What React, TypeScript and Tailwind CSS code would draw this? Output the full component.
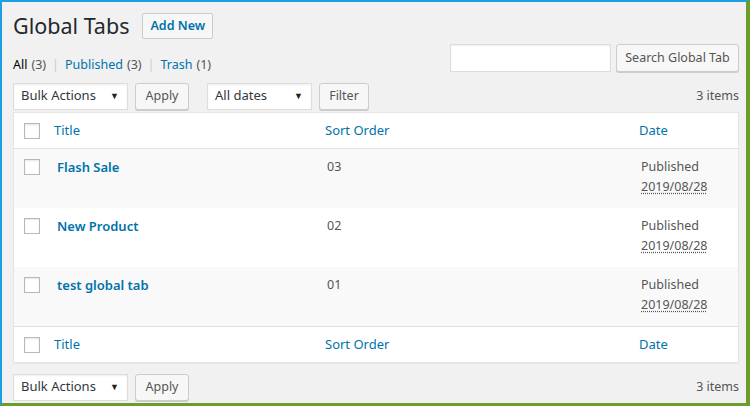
import React from "react";

const rows = [
  { title: "Flash Sale", order: "03", date: "2019/08/28" },
  { title: "New Product", order: "02", date: "2019/08/28" },
  { title: "test global tab", order: "01", date: "2019/08/28" },
];

function Checkbox() {
  return (
    <span className="block w-4 h-4 bg-white border border-[#b4b9be] shadow-[inset_0_1px_2px_rgba(0,0,0,0.1)]" />
  );
}

function Select({ label, width }: { label: string; width: string }) {
  return (
    <div
      className={`${width} h-[27px] flex items-center justify-between pl-[7px] pr-[8px] bg-white border border-[#ddd] shadow-[inset_0_1px_2px_rgba(0,0,0,0.07)] text-[13px] text-[#32373c]`}
    >
      <span>{label}</span>
      <span className="text-[9px] text-[#222]">▼</span>
    </div>
  );
}

function Button({ label, className = "" }: { label: string; className?: string }) {
  return (
    <button
      className={`h-[27px] px-[8px] whitespace-nowrap rounded-[3px] bg-[#f7f7f7] border border-[#ccc] shadow-[0_1px_0_#ccc] text-[12.5px] text-[#555] ${className}`}
    >
      {label}
    </button>
  );
}

function HeaderRow({ top }: { top: boolean }) {
  return (
    <div
      className={`grid grid-cols-[40px_271px_314px_1fr] items-center text-[13px] text-[#0073aa] ${
        top ? "h-[36px] border-b border-[#e1e1e1]" : "h-[36px] border-t border-[#e1e1e1]"
      }`}
    >
      <div className="pl-[10px]">
        <Checkbox />
      </div>
      <div>Title</div>
      <div>Sort Order</div>
      <div>Date</div>
    </div>
  );
}

export default function App() {
  return (
    <div
      className="w-[750px] h-[406px] overflow-hidden bg-[#f1f1f1] border-t-2 border-l-2 border-r-4 border-b-[3px] border-t-[#1e9ee2] border-l-[#1e9ee2] border-r-[#6c9c2c] border-b-[#6c9c2c] pl-[11px] pr-[7px]"
      style={{ fontFamily: '"Noto Sans", "Open Sans", sans-serif' }}
    >
      {/* Page title */}
      <div className="flex items-center h-[26px] mt-[11px]">
        <h1 className="text-[21.5px] text-[#23282d] leading-none">Global Tabs</h1>
        <button className="ml-[13px] h-[26px] px-[7px] rounded-[2px] bg-[#f7f7f7] border border-[#ccc] text-[12.5px] font-semibold text-[#0073aa]">
          Add New
        </button>
      </div>

      {/* Views + search */}
      <div className="flex justify-between items-start h-[28px] mt-[5px]">
        <div className="mt-[11px] leading-5 text-[12.5px] text-[#555] flex items-center">
          <span className="text-black">All</span>
          <span className="ml-1">(3)</span>
          <span className="mx-[6px] text-[#ccc]">|</span>
          <span className="text-[#0073aa]">Published</span>
          <span className="ml-1">(3)</span>
          <span className="mx-[6px] text-[#ccc]">|</span>
          <span className="text-[#0073aa]">Trash</span>
          <span className="ml-1">(1)</span>
        </div>
        <div className="flex items-center gap-[5px]">
          <div className="w-[161px] h-[28px] bg-white border border-[#ddd] shadow-[inset_0_1px_2px_rgba(0,0,0,0.07)]" />
          <Button label="Search Global Tab" className="h-[28px] w-[123px] px-0" />
        </div>
      </div>

      {/* Top tablenav */}
      <div className="flex items-center h-[28px] mt-[10px]">
        <Select label="Bulk Actions" width="w-[115px]" />
        <Button label="Apply" className="ml-[7px] w-[54px]" />
        <div className="ml-[18px]">
          <Select label="All dates" width="w-[105px]" />
        </div>
        <Button label="Filter" className="ml-[7px] w-[50px]" />
        <div className="ml-auto text-[12.5px] text-[#555]">3 items</div>
      </div>

      {/* Table */}
      <div className="mt-[2px] bg-white border border-[#e5e5e5] shadow-[0_1px_1px_rgba(0,0,0,0.04)]">
        <HeaderRow top />
        {rows.map((r, i) => (
          <div
            key={r.title}
            className={`grid grid-cols-[40px_271px_314px_1fr] h-[59px] items-start text-[12.5px] ${
              i % 2 === 0 ? "bg-[#f9f9f9]" : "bg-white"
            }`}
          >
            <div className="pl-[10px] pt-[10px]">
              <Checkbox />
            </div>
            <div className="pl-[3px] pt-[8px] leading-5 text-[13px] font-semibold text-[#0073aa]">
              {r.title}
            </div>
            <div className="pl-[2px] pt-[8px] leading-5 text-[#555]">{r.order}</div>
            <div className="pl-[2px] pt-[8px] leading-5 text-[#555]">
              <div>Published</div>
              <div className="underline decoration-dotted underline-offset-2">{r.date}</div>
            </div>
          </div>
        ))}
        <HeaderRow top={false} />
      </div>

      {/* Bottom tablenav */}
      <div className="flex items-center h-[28px] mt-[10px]">
        <Select label="Bulk Actions" width="w-[115px]" />
        <Button label="Apply" className="ml-[7px] w-[54px]" />
        <div className="ml-auto text-[12.5px] text-[#555]">3 items</div>
      </div>
    </div>
  );
}
